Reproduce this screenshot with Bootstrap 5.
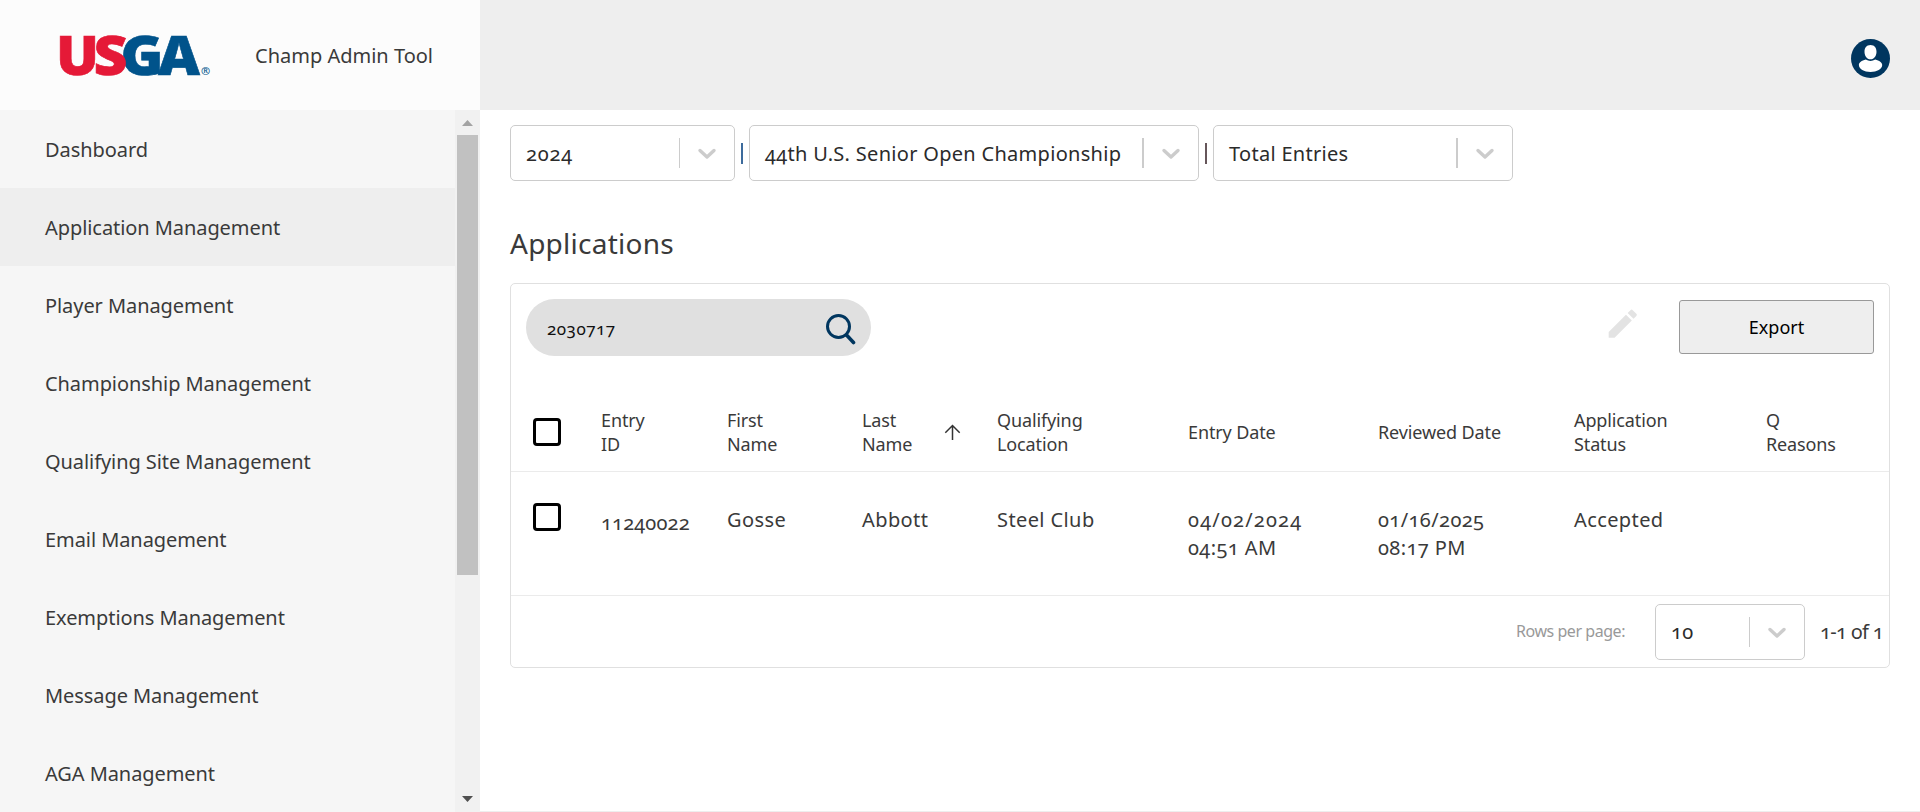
<!DOCTYPE html>
<html lang="en">
<head>
<meta charset="utf-8">
<title>Champ Admin Tool</title>
<link href="https://cdn.jsdelivr.net/npm/bootstrap@5.3.0/dist/css/bootstrap.min.css" rel="stylesheet">
<style>
  body { font-family: "Noto Sans", "Open Sans", sans-serif; font-size: 20px; font-weight: 400; font-variant-numeric: oldstyle-nums; color: #3a3a3a; line-height: 28px; }
  .top-bar { height: 110px; background: #eee; }
  .brand-box { width: 480px; background: #fcfcfc; padding-left: 60px; gap: 45px; }
  .brand-name { padding-top: 2px; }
  .logo-text { font-family: "Open Sans", sans-serif; font-weight: 800; font-size: 55px; stroke-width: .6px; }
  .side-nav { width: 455px; background: #f6f6f6; letter-spacing: -.07px; }
  .side-nav .nav-link { height: 78px; padding: 2px 45px 0; color: #3a3a3a; }
  .side-nav .nav-link.active { background: #eee; }
  .scroll-track { width: 25px; background: #f1f1f1; }
  .scroll-thumb { width: 21px; height: 440px; background: #c1c1c1; }
  .filters { padding: 15px 30px 0; }
  .picker { height: 56px; border: 1px solid #ccc; border-radius: 5px; background: #fff; color: #2b2b2b; padding-left: 15px; letter-spacing: .3px; }
  .picker-rule { width: 1px; height: 30px; background: #ccc; }
  .picker-rule.wide { width: 2px; }
  .picker svg { margin: 0 16px; }
  .picker-label { padding-top: 1px; }
  .picker-year { width: 225px; }
  .picker-year .picker-label { letter-spacing: .8px; }
  .picker-event { width: 450px; }
  .picker-view { width: 300px; }
  .picker-rows { width: 150px; margin-top: 1px; }
  .page-title { font-size: 28px; font-weight: 400; line-height: 36px; letter-spacing: .25px; margin: 44px 30px 0; }
  .panel { border: 1px solid #e0e0e0; border-radius: 5px; margin: 22px 30px 0; }
  .tool-row { height: 109px; padding: 15px 15px 0; }
  .search-pill { width: 345px; height: 57px; background: #e0e0e0; border-radius: 29px; padding: 3px 15px 0 21px; font-size: 17px; color: #111; letter-spacing: .5px; }
  .edit-icon { margin: 6px 38px 0 0; }
  .btn-export { width: 195px; height: 54px; margin-top: 1px; background: #eee; border: 1px solid #999; border-radius: 3px; font-size: 18px; color: #000; }
  .entries { table-layout: fixed; margin: 0; }
  .entries > :not(caption) > * > * { padding: 0; border-color: #ebebeb; color: #3a3a3a; background: none; }
  .entries th { height: 78px; font-size: 18px; line-height: 24px; font-weight: 400; letter-spacing: -.12px; vertical-align: middle; }
  .entries td { height: 124px; padding-top: 34px !important; letter-spacing: .4px; }
  .c-check { width: 90px; } .c-id { width: 126px; } .c-name { width: 135px; } .c-place { width: 191px; }
  .c-entry { width: 190px; } .c-review { width: 196px; } .c-status { width: 192px; } .c-reason { width: 123px; }
  .box { width: 28px; height: 28px; border: 3px solid #000; border-radius: 4px; margin: 0 0 0 22px; }
  td .box { margin-top: -3px; }
  .entry-id { padding-top: 3px; letter-spacing: .15px; }
  .day { letter-spacing: 1.2px; }
  .reviewed { letter-spacing: .25px; }
  .sort-arrow { margin: 1px 0 0 32px; }
  .pager { height: 71px; padding-right: 7px; }
  .pager-label { font-size: 16px; color: #999; margin-right: 30px; letter-spacing: -.45px; }
  .pager-range { margin-left: 15px; width: 62px; letter-spacing: -.7px; padding-top: 2px; }
  .page-edge { height: 1px; background: #eee; }
</style>
</head>
<body class="vh-100 d-flex flex-column overflow-hidden bg-white">
  <header class="top-bar d-flex flex-shrink-0">
    <div class="brand-box d-flex align-items-center">
      <svg width="150" height="44" viewBox="0 0 150 44" class="overflow-visible">
        <g class="logo-text">
          <text x="-4" y="41.500" fill="#e51937" stroke="#e51937" textLength="43" lengthAdjust="spacingAndGlyphs">U</text>
          <text x="60.500" y="41.500" fill="#00538b" stroke="#00538b" textLength="43" lengthAdjust="spacingAndGlyphs">G</text>
          <text x="98" y="41.500" fill="#00538b" stroke="#00538b" textLength="42" lengthAdjust="spacingAndGlyphs">A</text>
          <text x="33.500" y="41.500" fill="#e51937" stroke="#e51937" textLength="34" lengthAdjust="spacingAndGlyphs">S</text>
        </g>
        <text x="141" y="42" font-size="11" font-weight="500" fill="#00538b">®</text>
      </svg>
      <span class="brand-name">Champ Admin Tool</span>
    </div>
    <div class="ms-auto d-flex align-items-center pe-4">
      <svg width="39" height="39" viewBox="0 0 39 39" style="margin: 7px 6px 0 0">
        <circle cx="19.500" cy="19.500" r="19.500" fill="#00365f"/>
        <path fill="#fff" d="M19.500 6c3.900 0 6 2.800 6 6.700 0 4-2.300 7.600-6 7.600s-6-3.600-6-7.600C13.500 8.800 15.600 6 19.500 6zM14.800 20.500c2.800 1.900 6.600 1.900 9.400 0 4.200.9 7 3 7 5.500 0 4.200-5.300 6.900-11.700 6.900S7.900 30.200 7.900 26c0-2.500 2.700-4.600 6.900-5.500z"/>
      </svg>
    </div>
  </header>

  <div class="d-flex flex-grow-1 overflow-hidden">
    <nav class="side-nav nav flex-column flex-nowrap flex-shrink-0 overflow-hidden">
      <a class="nav-link d-flex align-items-center flex-shrink-0" href="#">Dashboard</a>
      <a class="nav-link d-flex align-items-center flex-shrink-0 active" href="#">Application Management</a>
      <a class="nav-link d-flex align-items-center flex-shrink-0" href="#">Player Management</a>
      <a class="nav-link d-flex align-items-center flex-shrink-0" href="#">Championship Management</a>
      <a class="nav-link d-flex align-items-center flex-shrink-0" href="#">Qualifying Site Management</a>
      <a class="nav-link d-flex align-items-center flex-shrink-0" href="#">Email Management</a>
      <a class="nav-link d-flex align-items-center flex-shrink-0" href="#">Exemptions Management</a>
      <a class="nav-link d-flex align-items-center flex-shrink-0" href="#">Message Management</a>
      <a class="nav-link d-flex align-items-center flex-shrink-0" href="#">AGA Management</a>
    </nav>
    <div class="scroll-track d-flex flex-column align-items-center flex-shrink-0">
      <svg width="25" height="25" class="flex-shrink-0"><path d="M12.500 10 18 16H7z" fill="#a3a3a3"/></svg>
      <div class="scroll-thumb flex-shrink-0"></div>
      <svg width="25" height="25" class="mt-auto flex-shrink-0"><path d="M7 9h11L12.500 15z" fill="#505050"/></svg>
    </div>

    <main class="flex-grow-1 d-flex flex-column">
      <div class="filters d-flex align-items-center">
        <div class="picker picker-year d-flex align-items-center"><span class="picker-label me-auto">2024</span><span class="picker-rule"></span>
          <svg width="22" height="22" viewBox="0 0 22 22" fill="none" stroke="#ccc" stroke-width="3.400" stroke-linecap="round" stroke-linejoin="round"><path d="M4 8.500l7 6.500 7-6.500"/></svg></div>
        <svg width="14" height="22"><path d="M7 1v21" stroke="#3d6b9c" stroke-width="2"/></svg>
        <div class="picker picker-event d-flex align-items-center"><span class="picker-label me-auto text-nowrap">44th U.S. Senior Open Championship</span><span class="picker-rule wide"></span>
          <svg width="22" height="22" viewBox="0 0 22 22" fill="none" stroke="#ccc" stroke-width="3.400" stroke-linecap="round" stroke-linejoin="round"><path d="M4 8.500l7 6.500 7-6.500"/></svg></div>
        <svg width="14" height="22"><path d="M7 1v21" stroke="#66565a" stroke-width="2"/></svg>
        <div class="picker picker-view d-flex align-items-center"><span class="picker-label me-auto">Total Entries</span><span class="picker-rule wide"></span>
          <svg width="22" height="22" viewBox="0 0 22 22" fill="none" stroke="#ccc" stroke-width="3.400" stroke-linecap="round" stroke-linejoin="round"><path d="M4 8.500l7 6.500 7-6.500"/></svg></div>
      </div>

      <h1 class="page-title">Applications</h1>

      <section class="panel">
        <div class="tool-row d-flex align-items-start">
          <div class="search-pill d-flex align-items-center justify-content-between"><span>2030717</span>
            <svg width="30" height="31" viewBox="0 0 30 31" fill="none" stroke="#00365f"><circle cx="12.500" cy="12.500" r="11" stroke-width="3"/><path d="M20.500 21l7 7.500" stroke-width="3.600" stroke-linecap="round"/></svg></div>
          <svg class="edit-icon ms-auto" width="37.500" height="37.500" viewBox="0 0 24 24" fill="#e3e3e3"><path d="M3 17.250V21h3.750L17.810 9.940l-3.750-3.750L3 17.250zM20.710 7.040a1 1 0 0 0 0-1.410l-2.340-2.340a1 1 0 0 0-1.410 0l-1.830 1.830 3.750 3.750 1.830-1.830z"/></svg>
          <button class="btn btn-export p-0" type="button">Export</button>
        </div>
        <table class="table entries">
          <colgroup><col class="c-check"><col class="c-id"><col class="c-name"><col class="c-name"><col class="c-place"><col class="c-entry"><col class="c-review"><col class="c-status"><col class="c-reason"></colgroup>
          <thead><tr>
            <th><div class="box"></div></th>
            <th>Entry<br>ID</th><th>First<br>Name</th>
            <th><div class="d-flex align-items-center"><span>Last<br>Name</span><svg class="sort-arrow" width="17" height="17" viewBox="0 0 17 17" fill="none" stroke="#333" stroke-width="1.500"><path d="M8.500 16V1.500M1.300 8.700l7.200-7.200 7.200 7.200"/></svg></div></th>
            <th>Qualifying<br>Location</th><th>Entry Date</th><th>Reviewed Date</th><th>Application<br>Status</th><th>Q<br>Reasons</th>
          </tr></thead>
          <tbody><tr>
            <td><div class="box"></div></td>
            <td><div class="entry-id">11240022</div></td><td>Gosse</td><td>Abbott</td><td>Steel Club</td><td><span class="day">04/02/2024</span><br>04:51 AM</td><td class="reviewed">01/16/2025<br>08:17 PM</td><td>Accepted</td><td></td>
          </tr></tbody>
        </table>
        <div class="pager d-flex align-items-center justify-content-end">
          <span class="pager-label">Rows per page:</span>
          <div class="picker picker-rows d-flex align-items-center"><span class="picker-label me-auto">10</span><span class="picker-rule"></span>
            <svg width="22" height="22" viewBox="0 0 22 22" fill="none" stroke="#ccc" stroke-width="3.400" stroke-linecap="round" stroke-linejoin="round"><path d="M4 8.500l7 6.500 7-6.500"/></svg></div>
          <span class="pager-range text-nowrap">1-1 of 1</span>
        </div>
      </section>
      <div class="page-edge mt-auto"></div>
    </main>
  </div>
<script src="https://cdn.jsdelivr.net/npm/bootstrap@5.3.0/dist/js/bootstrap.bundle.min.js"></script>
</body>
</html>
